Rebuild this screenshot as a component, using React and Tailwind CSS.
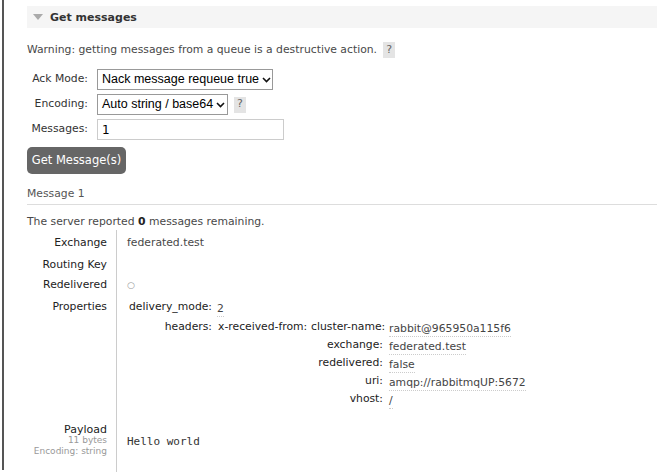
import React from "react";

const headers = [
  { key: "cluster-name:", value: "rabbit@965950a115f6" },
  { key: "exchange:", value: "federated.test" },
  { key: "redelivered:", value: "false" },
  { key: "uri:", value: "amqp://rabbitmqUP:5672" },
  { key: "vhost:", value: "/" },
];

const Help = () => (
  <span className="inline-flex items-center justify-center w-[12px] h-[16px] bg-[#e4e4e4] text-[#666] text-[11px] ml-[6px]">
    ?
  </span>
);

const Select = ({ width, children }) => (
  <div
    className={`flex items-center justify-between h-[21px] border border-[#999] bg-white pl-[4px] pr-[5px] text-[12.5px] text-black whitespace-nowrap ${width}`}
    style={{ fontFamily: '"Liberation Sans", Arial, sans-serif' }}
  >
    <span>{children}</span>
    <svg width="9" height="6" viewBox="0 0 9 6" className="ml-[3px] shrink-0">
      <path d="M1 1 L4.5 4.5 L8 1" fill="none" stroke="#111" strokeWidth="1.6" />
    </svg>
  </div>
);

const Val = ({ children }) => (
  <span className="inline-block pt-[3px] border-b border-dotted border-[#ccc] leading-[14px] text-[#444] whitespace-nowrap">
    {children}
  </span>
);

const App = () => {
  return (
    <div
      className="w-[657px] h-[472px] bg-white overflow-hidden text-[10.8px] text-[#484848]"
      style={{ fontFamily: '"DejaVu Sans", Verdana, sans-serif' }}
    >
      <div className="ml-[2px] h-[470px] border-l-[2px] border-[#555] pl-[23px] pt-[6px]">
        <div className="flex items-center h-[22px] bg-[#f5f5f5] pl-[6px]">
          <svg width="10" height="6" viewBox="0 0 10 6">
            <path d="M0 0 H10 L5 6 Z" fill="#aaa" />
          </svg>
          <span className="ml-[7px] font-bold text-[#333] text-[11px] pt-[2px]">Get messages</span>
        </div>

        <div className="flex items-center mt-[14px] h-[16px]">
          <span>Warning: getting messages from a queue is a destructive action.</span>
          <Help />
        </div>

        <div className="mt-[11px] flex flex-col gap-[4px]">
          <div className="flex items-center">
            <span className="w-[61px] text-right text-[#333]">Ack Mode:</span>
            <div className="ml-[9px]">
              <Select width="w-[176px]">Nack message requeue true</Select>
            </div>
          </div>
          <div className="flex items-center">
            <span className="w-[61px] text-right text-[#333]">Encoding:</span>
            <div className="ml-[9px]">
              <Select width="w-[131px]">Auto string / base64</Select>
            </div>
            <Help />
          </div>
          <div className="flex items-center">
            <span className="w-[61px] text-right text-[#333]">Messages:</span>
            <div className="ml-[9px] w-[187px] h-[21px] border border-[#ccc] px-[4px] flex items-center text-[12px] text-black">
              1
            </div>
          </div>
        </div>

        <button className="mt-[7px] h-[27px] w-[99px] rounded-[5px] bg-[#666] text-white text-[11.5px]">
          Get Message(s)
        </button>

        <div className="mt-[12px] pb-[2px] border-b border-[#ddd] text-[#555]">Message 1</div>

        <div className="mt-[9px]">
          The server reported <b className="font-bold text-[#222]">0</b> messages remaining.
        </div>

        <div className="grid grid-cols-[90px_1fr] text-[#222]">
          <div className="border-r border-[#ccc] pr-[9px] text-right pt-[5px] h-[22px]">Exchange</div>
          <div className="pl-[10px] pt-[5px] text-[#484848]">federated.test</div>

          <div className="border-r border-[#ccc] pr-[9px] text-right pt-[5px] h-[21px]">Routing Key</div>
          <div />

          <div className="border-r border-[#ccc] pr-[9px] text-right pt-[4px] h-[21px]">Redelivered</div>
          <div className="pl-[10px] pt-[6px] text-[#999] text-[9px]">○</div>

          <div className="border-r border-[#ccc] pr-[9px] text-right pt-[5px]">Properties</div>
          <div className="pl-[12px] pt-[5px]">
            <div className="grid grid-cols-[83px_1fr] gap-x-[5px] gap-y-[1px]">
              <span className="text-right whitespace-nowrap">delivery_mode:</span>
              <span><Val>2</Val></span>
              <span className="text-right">headers:</span>
              <div className="flex">
                <span className="ml-[1px] w-[93px] shrink-0 whitespace-nowrap">x-received-from:</span>
                <div className="grid grid-cols-[72px_auto] gap-x-[6px] justify-start">
                  {headers.map((h) => (
                    <React.Fragment key={h.key}>
                      <span className="text-right whitespace-nowrap">{h.key}</span>
                      <span><Val>{h.value}</Val></span>
                    </React.Fragment>
                  ))}
                </div>
              </div>
            </div>
          </div>

          <div className="border-r border-[#ccc] pr-[9px] text-right pt-[14px] h-[70px] leading-[11px]">
            <div className="text-[11px]">Payload</div>
            <div className="text-[9px] text-[#999]">11 bytes</div>
            <div className="text-[9px] text-[#999]">Encoding: string</div>
          </div>
          <div className="pl-[10px] pt-[24px] text-[11px] text-[#333]" style={{ fontFamily: '"DejaVu Sans Mono", monospace' }}>
            Hello world
          </div>
        </div>
      </div>
    </div>
  );
};

export default App;
